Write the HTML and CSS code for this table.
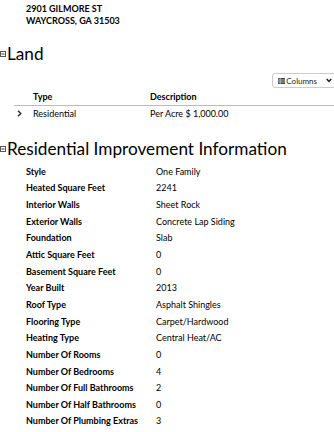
FILE: index.html
```html
<!DOCTYPE html>
<html>
<head>
<meta charset="utf-8">
<link rel="stylesheet" href="styles.css">
</head>
<body>
<div class="address">
  <div>2901 GILMORE ST</div>
  <div>WAYCROSS, GA 31503</div>
</div>

<h2 class="section-title"><span class="toggle"><svg width="6" height="6" viewBox="0 0 6 6"><rect x="0.5" y="0.5" width="5" height="5" fill="none" stroke="#555" stroke-width="1"/><line x1="1.5" y1="3" x2="4.5" y2="3" stroke="#333" stroke-width="1"/></svg></span>Land</h2>

<div class="toolbar">
  <button class="columns-btn"><svg width="7" height="6" viewBox="0 0 7 6"><rect x="0" y="0" width="7" height="6" fill="#444"/><line x1="0" y1="2" x2="7" y2="2" stroke="#ddd" stroke-width="0.7"/><line x1="0" y1="4" x2="7" y2="4" stroke="#ddd" stroke-width="0.7"/><line x1="2.2" y1="0" x2="2.2" y2="6" stroke="#ddd" stroke-width="0.7"/></svg><span>Columns</span><svg class="caret" width="6" height="5" viewBox="0 0 6 5"><path d="M0.7 0.9 L3 3.4 L5.3 0.9" fill="none" stroke="#222" stroke-width="1.5"/></svg></button>
</div>

<table class="land">
  <thead>
    <tr><th class="exp"></th><th class="c-type">Type</th><th>Description</th></tr>
  </thead>
  <tbody>
    <tr><td class="exp"><svg width="5" height="7" viewBox="0 0 5 7"><path d="M1 0.8 L3.8 3.5 L1 6.2" fill="none" stroke="#333" stroke-width="1.5"/></svg></td><td>Residential</td><td>Per Acre $ 1,000.00</td></tr>
  </tbody>
</table>

<h2 class="section-title second"><span class="toggle"><svg width="6" height="6" viewBox="0 0 6 6"><rect x="0.5" y="0.5" width="5" height="5" fill="none" stroke="#555" stroke-width="1"/><line x1="1.5" y1="3" x2="4.5" y2="3" stroke="#333" stroke-width="1"/></svg></span>Residential Improvement Information</h2>

<div class="details">
  <div class="lbl">Style</div><div class="val">One Family</div>
  <div class="lbl">Heated Square Feet</div><div class="val">2241</div>
  <div class="lbl">Interior Walls</div><div class="val">Sheet Rock</div>
  <div class="lbl">Exterior Walls</div><div class="val">Concrete Lap Siding</div>
  <div class="lbl">Foundation</div><div class="val">Slab</div>
  <div class="lbl">Attic Square Feet</div><div class="val">0</div>
  <div class="lbl">Basement Square Feet</div><div class="val">0</div>
  <div class="lbl">Year Built</div><div class="val">2013</div>
  <div class="lbl">Roof Type</div><div class="val">Asphalt Shingles</div>
  <div class="lbl">Flooring Type</div><div class="val">Carpet/Hardwood</div>
  <div class="lbl">Heating Type</div><div class="val">Central Heat/AC</div>
  <div class="lbl">Number Of Rooms</div><div class="val">0</div>
  <div class="lbl">Number Of Bedrooms</div><div class="val">4</div>
  <div class="lbl">Number Of Full Bathrooms</div><div class="val">2</div>
  <div class="lbl">Number Of Half Bathrooms</div><div class="val">0</div>
  <div class="lbl">Number Of Plumbing Extras</div><div class="val">3</div>
</div>
</body>
</html>
```

FILE: styles.css
```css
html, body {
  margin: 0;
  padding: 0;
  background: #fff;
}
body {
  font-family: Lato, "Liberation Sans", sans-serif;
  color: #000;
  font-size: 9px;
}
.address {
  padding: 3px 0 0 26px;
  font-weight: bold;
  font-size: 9px;
  line-height: 12px;
}
.section-title {
  margin: 16px 0 0 0;
  font-weight: normal;
  font-size: 17.2px;
  line-height: 22px;
  display: flex;
  align-items: center;
}
.section-title.second {
  margin-top: 17px;
}
.toggle {
  display: flex;
  width: 7px;
}
.toolbar {
  display: flex;
  justify-content: flex-end;
  margin-top: 8px;
}
.columns-btn {
  display: flex;
  align-items: center;
  gap: 1px;
  height: 15px;
  padding: 0 7px 0 5px;
  border: 1px solid #ccc;
  border-radius: 3px;
  background: #fff;
  font-family: inherit;
  font-size: 8px;
  color: #222;
  margin-right: -6px;
}
.columns-btn .caret {
  margin-left: 8px;
}
.land {
  border-collapse: collapse;
  margin-left: 14px;
  width: calc(100% - 14px);
  margin-top: 1px;
}
.land th {
  text-align: left;
  font-weight: bold;
  padding: 2px 0 3px 0;
  border-bottom: 1px solid #bbb;
}
.land td {
  padding: 2px 0;
}
.land .exp {
  width: 16px;
  text-align: left;
  padding-left: 3px;
}
.land .c-type {
  width: 117px;
}
.details {
  display: grid;
  grid-template-columns: 130px 1fr;
  grid-auto-rows: 16.65px;
  align-items: center;
  padding-left: 26px;
  margin-top: 3px;
}
.lbl {
  font-weight: bold;
}
```
